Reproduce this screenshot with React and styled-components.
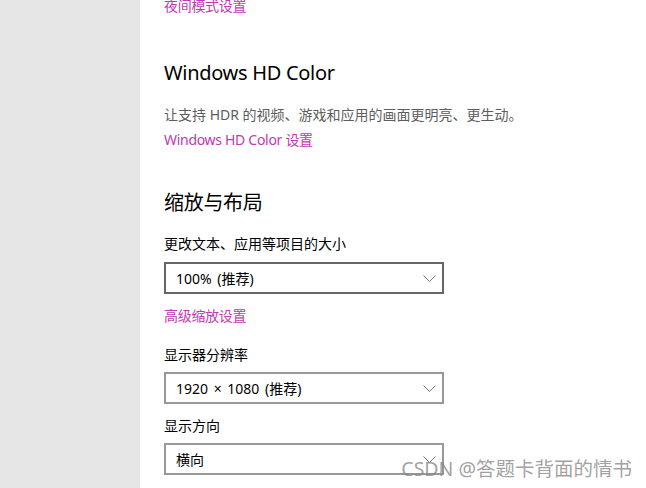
import { createGlobalStyle, styled } from "styled-components";

const Global = createGlobalStyle`
  html, body {
    margin: 0;
    padding: 0;
    background: #fff;
    overflow: hidden;
  }
  body {
    font-family: "Noto Sans", "Noto Sans CJK SC", sans-serif;
    letter-spacing: -0.3px;
  }
`;

function Chevron() {
  return (
    <svg width="13" height="7" viewBox="0 0 13 7">
      <path d="M0.5 0.5 L6.5 6.5 L12.5 0.5" fill="none" stroke="#777" strokeWidth="1" />
    </svg>
  );
}

function Select({ value, active }) {
  return (
    <SelectBox $active={active}>
      <span>{value}</span>
      <Chevron />
    </SelectBox>
  );
}

export default function App() {
  return (
    <Page>
      <Global />
      <Sidebar />
      <Content>
        <Link $top={-4}>夜间模式设置</Link>
        <Heading $top={43}>Windows HD Color</Heading>
        <Desc $top={18}>让支持 HDR 的视频、游戏和应用的画面更明亮、更生动。</Desc>
        <Link $top={5}>Windows HD Color 设置</Link>
        <Heading $top={39}>缩放与布局</Heading>
        <Label $top={17}>更改文本、应用等项目的大小</Label>
        <Field $top={8}>
          <Select value="100% (推荐)" active />
        </Field>
        <Link $top={12}>高级缩放设置</Link>
        <Label $top={19}>显示器分辨率</Label>
        <Field $top={7}>
          <Select value="1920 × 1080 (推荐)" />
        </Field>
        <Label $top={12}>显示方向</Label>
        <Field $top={7}>
          <Select value="横向" />
        </Field>
      </Content>
      <Watermark>CSDN @答题卡背面的情书</Watermark>
    </Page>
  );
}

const Page = styled.div`
  position: relative;
  display: flex;
  width: 646px;
  height: 488px;
  overflow: hidden;
`;

const Sidebar = styled.div`
  width: 140px;
  flex-shrink: 0;
  background: #e6e6e6;
`;

const Content = styled.div`
  flex: 1;
  padding-left: 24px;
  display: flex;
  flex-direction: column;
  align-items: flex-start;
`;

const Link = styled.div`
  margin-top: ${(p) => p.$top}px;
  font-size: 14px;
  line-height: 20px;
  color: #c239b3;
`;

const Heading = styled.div`
  margin-top: ${(p) => p.$top}px;
  font-size: 20px;
  line-height: 28px;
  color: #000;
`;

const Desc = styled.div`
  margin-top: ${(p) => p.$top}px;
  font-size: 14px;
  line-height: 20px;
  letter-spacing: 0;
  color: #5d5d5d;
`;

const Label = styled.div`
  margin-top: ${(p) => p.$top}px;
  font-size: 14px;
  line-height: 20px;
  letter-spacing: 0;
  color: #000;
`;

const Field = styled.div`
  margin-top: ${(p) => p.$top}px;
`;

const SelectBox = styled.div`
  box-sizing: border-box;
  width: 280px;
  height: 32px;
  border: 2px solid ${(p) => (p.$active ? "#666" : "#999")};
  padding: 0 6px 0 10px;
  display: flex;
  align-items: center;
  justify-content: space-between;
  font-size: 14px;
  letter-spacing: 0;
  word-spacing: 2px;
  color: #000;
`;

const Watermark = styled.div`
  position: absolute;
  right: 14px;
  bottom: 7px;
  font-size: 19.5px;
  line-height: 24px;
  letter-spacing: 0;
  color: rgba(130, 130, 130, 0.75);
`;
